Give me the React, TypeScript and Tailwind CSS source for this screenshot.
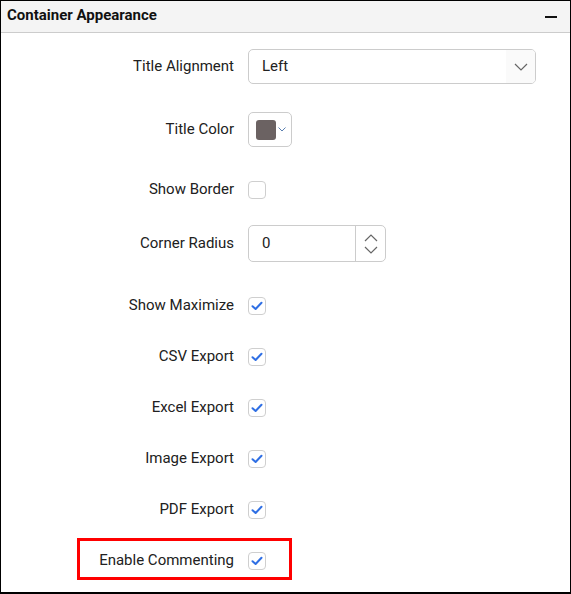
import React from "react";

function Check({ checked }: { checked: boolean }) {
    return (
        <div className="w-[18px] h-[18px] rounded-[4px] border border-[#cfcfcf] bg-white flex items-center justify-center">
            {checked && (
                <svg width="12" height="10" viewBox="0 0 12 10" fill="none">
                    <path d="M1.5 5.2 L4.6 8 L10.5 1.8" stroke="#2f6fe4" strokeWidth="2" strokeLinecap="round" strokeLinejoin="round" />
                </svg>
            )}
        </div>
    );
}

function Row({ label, children, className = "" }: { label: string; children: React.ReactNode; className?: string }) {
    return (
        <div className={`relative flex items-center h-[51px] ${className}`}>
            <div className="w-[233px] text-right text-[15px] leading-[20px] text-[#212121] -mt-[2px]">{label}</div>
            <div className="ml-[14px] flex items-center">{children}</div>
        </div>
    );
}

export default function App() {
    const exports = ["CSV Export", "Excel Export", "Image Export", "PDF Export"];

    return (
        <div
            className="w-[571px] h-[594px] border border-b-2 border-black bg-white flex flex-col"
            style={{ fontFamily: "Roboto, 'Liberation Sans', sans-serif" }}
        >
            {/* Header */}
            <div className="h-[32px] shrink-0 bg-[#f4f4f4] border-b border-[#cccccc] flex items-center justify-between pl-[6px] pr-[13px]">
                <span className="text-[15px] font-bold text-[#111] -mt-[2px]">Container Appearance</span>
                <span className="w-[12px] h-[2px] bg-[#111]" />
            </div>

            {/* Body */}
            <div className="flex flex-col pt-[8px]">
                <Row label="Title Alignment">
                    <div className="w-[288px] h-[35px] rounded-[5px] border border-[#cccccc] flex items-center overflow-hidden">
                        <span className="flex-1 pl-[13px] text-[15px] text-[#222]">Left</span>
                        <div className="w-[29px] h-full bg-[#fafafa] flex items-center justify-center">
                            <svg width="14" height="8" viewBox="0 0 14 8" fill="none">
                                <path d="M1 1 L7 7 L13 1" stroke="#666" strokeWidth="1.2" />
                            </svg>
                        </div>
                    </div>
                </Row>

                <Row label="Title Color" className="mt-[12px]">
                    <div className="w-[44px] h-[35px] rounded-[5px] border border-[#cccccc] flex items-center pl-[7px]">
                        <div className="w-[20px] h-[20px] rounded-[3px] bg-[#6b6262]" />
                        <svg className="ml-[2px]" width="8" height="5" viewBox="0 0 8 5" fill="none">
                            <path d="M0.5 0.5 L4 4 L7.5 0.5" stroke="#5a7fb0" strokeWidth="1" />
                        </svg>
                    </div>
                </Row>

                <Row label="Show Border" className="mt-[9px]">
                    <Check checked={false} />
                </Row>

                <Row label="Corner Radius" className="mt-[3px]">
                    <div className="w-[138px] h-[37px] rounded-[5px] border border-[#cccccc] flex items-center">
                        <span className="flex-1 pl-[13px] text-[15px] text-[#222]">0</span>
                        <div className="w-[30px] h-full border-l border-[#cccccc] flex flex-col items-center justify-center gap-[4px]">
                            <svg width="14" height="8" viewBox="0 0 14 8" fill="none">
                                <path d="M1 7 L7 1 L13 7" stroke="#666" strokeWidth="1.2" />
                            </svg>
                            <svg width="14" height="8" viewBox="0 0 14 8" fill="none">
                                <path d="M1 1 L7 7 L13 1" stroke="#666" strokeWidth="1.2" />
                            </svg>
                        </div>
                    </div>
                </Row>

                <Row label="Show Maximize" className="mt-[11px]">
                    <Check checked />
                </Row>

                {exports.map((e) => (
                    <Row key={e} label={e}>
                        <Check checked />
                    </Row>
                ))}

                <Row label="Enable Commenting">
                    <Check checked />
                    {/* highlight */}
                    <div className="absolute left-[76px] top-[3px] w-[215px] h-[42px] border-[3px] border-[#ff0000]" />
                </Row>
            </div>
        </div>
    );
}
